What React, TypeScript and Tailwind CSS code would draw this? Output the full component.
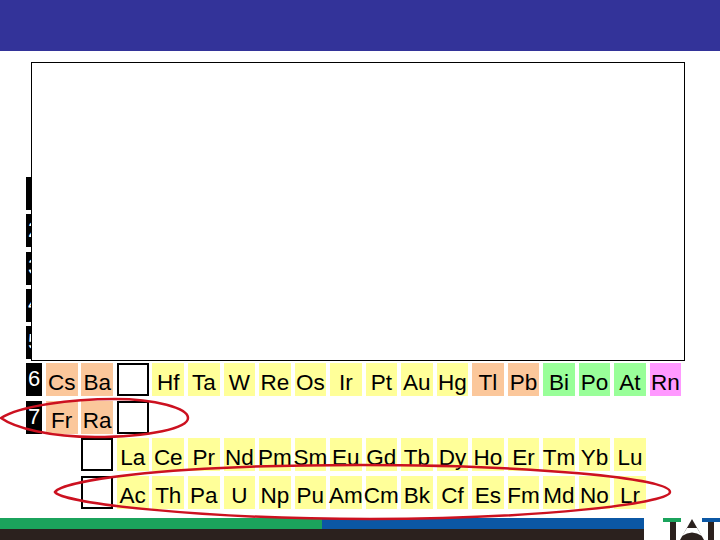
const Y = "bg-[#ffff99]";
const O = "bg-[#fbc79b]";
const G = "bg-[#99ff99]";
const P = "bg-[#ff99ff]";

const row6: [string, string][] = [
  ["Cs", O], ["Ba", O], ["", ""], ["Hf", Y], ["Ta", Y], ["W", Y], ["Re", Y], ["Os", Y], ["Ir", Y],
  ["Pt", Y], ["Au", Y], ["Hg", Y], ["Tl", O], ["Pb", O], ["Bi", G], ["Po", G], ["At", G], ["Rn", P],
];
const lanthanides = ["La", "Ce", "Pr", "Nd", "Pm", "Sm", "Eu", "Gd", "Tb", "Dy", "Ho", "Er", "Tm", "Yb", "Lu"];
const actinides = ["Ac", "Th", "Pa", "U", "Np", "Pu", "Am", "Cm", "Bk", "Cf", "Es", "Fm", "Md", "No", "Lr"];

const gridCls = "grid grid-cols-[16px_repeat(18,31.6px)] gap-x-[3.93px] h-[33px]";

function Num({ n }: { n: number }) {
  return (
    <div className={`bg-black text-white flex items-center justify-center h-[33px] text-[22px] leading-none ${n === 7 ? "" : "pb-[2px]"} ${n === 1 ? "pl-[4px]" : ""}`}>
      {n}
    </div>
  );
}

function Cell({ label, color }: { label: string; color: string }) {
  return (
    <div className={`${color} h-[33px] flex items-center justify-center whitespace-nowrap text-[22.5px] leading-none pt-[7px] text-black`}>
      {label}
    </div>
  );
}

function Box() {
  return <div className="h-[33px] border-2 border-black bg-white" />;
}

function Logo() {
  return (
    <svg width="76" height="22" viewBox="0 0 76 22" className="block">
      <rect x="19" y="0" width="18" height="4" fill="#1ba35c" />
      <rect x="58" y="0" width="18" height="4" fill="#0b57a4" />
      <rect x="26" y="4" width="6" height="18" fill="#2b211e" />
      <polygon points="48,1 36,22 60,22" fill="#2b211e" />
      <path d="M43 10 L53 10 L58 18 Q48 11 38 18 Z" fill="#fff" />
      <rect x="64" y="4" width="6" height="18" fill="#2b211e" />
    </svg>
  );
}

export default function App() {
  return (
    <div className="relative w-[720px] h-[540px] overflow-hidden bg-white flex flex-col font-['Liberation_Sans',Arial,sans-serif]">
      <div className="h-[51px] bg-[#333399]" />

      <div className="flex-1 pt-[126px] pl-[26px] flex flex-col gap-y-[4.3px]">
        {[1, 2, 3, 4, 5].map((n) => (
          <div key={n} className={gridCls}>
            <Num n={n} />
          </div>
        ))}
        <div className={gridCls}>
          <Num n={6} />
          {row6.map(([label, color], i) =>
            label ? <Cell key={i} label={label} color={color} /> : <Box key={i} />
          )}
        </div>
        <div className={gridCls}>
          <Num n={7} />
          <Cell label="Fr" color={O} />
          <Cell label="Ra" color={O} />
          <Box />
        </div>
        <div className={gridCls}>
          <div />
          <div />
          <Box />
          {lanthanides.map((el) => (
            <Cell key={el} label={el} color={Y} />
          ))}
        </div>
        <div className={`${gridCls} mt-[1px]`}>
          <div />
          <div />
          <Box />
          {actinides.map((el) => (
            <Cell key={el} label={el} color={Y} />
          ))}
        </div>
      </div>

      <div className="h-[22px] flex">
        <div className="w-[644px] flex flex-col">
          <div className="h-[11px] flex">
            <div className="w-[322px] bg-[#1ba35c]" />
            <div className="flex-1 bg-[#0b57a4]" />
          </div>
          <div className="h-[11px] bg-[#2b211e]" />
        </div>
        <Logo />
      </div>

      {/* slide box covering the upper rows */}
      <div className="absolute left-[31px] top-[62px] w-[654px] h-[299px] bg-white border border-black" />

      {/* red rings */}
      <svg className="absolute left-0 top-0 pointer-events-none" width="720" height="540" viewBox="0 0 720 540" fill="none">
        <path
          d="M1 418 C20 406 70 399 115 399 C155 399 188 408 188 418 C188 428 150 437 95 437 C50 437 15 428 1 418 Z"
          stroke="#cc1120"
          strokeWidth="2.5"
        />
        <path
          d="M55 492 C62 482 150 465 360 465 C530 465 670 478 670 492 C670 503 540 519 370 519 C200 519 62 503 55 492 Z"
          stroke="#cc1120"
          strokeWidth="2.5"
        />
      </svg>
    </div>
  );
}
